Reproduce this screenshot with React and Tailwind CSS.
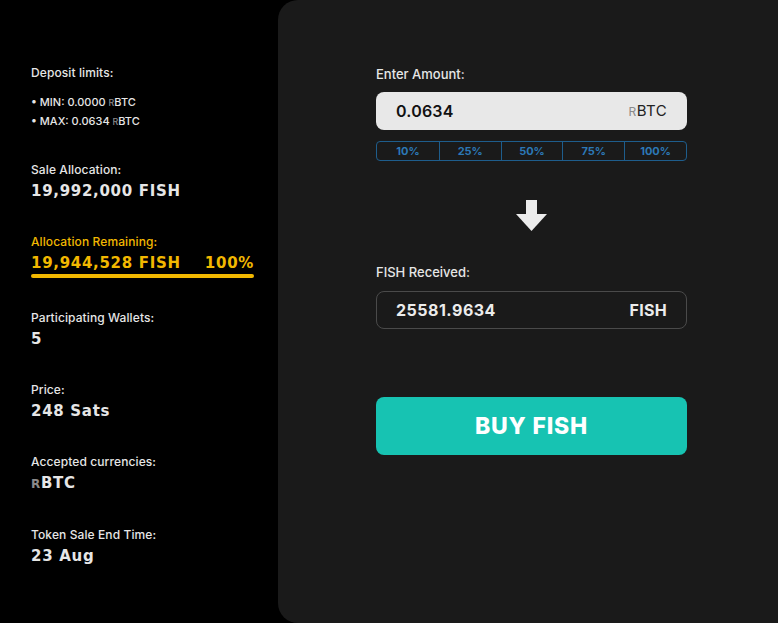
import React from 'react'

const label = "font-['Inter',sans-serif] font-medium text-[12px] text-[#e6e6e6] leading-[16px] tracking-[0.1px]"
const value = "font-['DejaVu_Sans',sans-serif] font-bold text-[15px] text-[#e6e6e6] leading-[20px] tracking-[0.7px]"

function Rbtc({ className = '' }) {
    return (
        <span className={className}>
            <span className="text-[#8a8a8a] text-[0.8em]">R</span>BTC
        </span>
    )
}

function Stat({ title, children, className = '' }) {
    return (
        <div className={`flex flex-col gap-[3px] ${className}`}>
            <div className={label}>{title}</div>
            <div className={value}>{children}</div>
        </div>
    )
}

export default function App() {
    const percents = ['10%', '25%', '50%', '75%', '100%']

    return (
        <div className="w-[778px] h-[623px] bg-black flex overflow-hidden">
            {/* left info column */}
            <div className="w-[278px] shrink-0 pl-[31px] pt-[65px] flex flex-col">
                <div className={label}>Deposit limits:</div>
                <div className="mt-[12px] flex flex-col font-['Inter',sans-serif] font-medium text-[11px] text-[#e6e6e6] leading-[18px]">
                    <div>• MIN: 0.0000 <Rbtc /></div>
                    <div>• MAX: 0.0634 <Rbtc /></div>
                </div>

                <Stat title="Sale Allocation:" className="mt-[31px]">19,992,000 FISH</Stat>

                <div className="mt-[33px] w-[223px] flex flex-col">
                    <div className={`${label} !text-[#f2b800]`}>Allocation Remaining:</div>
                    <div className={`${value} !text-[#f2b800] mt-[3px] flex justify-between`}>
                        <span>19,944,528 FISH</span>
                        <span>100%</span>
                    </div>
                    <div className="mt-[1px] h-[4px] rounded-full bg-[#f2b800]"></div>
                </div>

                <Stat title="Participating Wallets:" className="mt-[32px]">5</Stat>
                <Stat title="Price:" className="mt-[33px]">248 Sats</Stat>
                <Stat title="Accepted currencies:" className="mt-[33px]"><Rbtc /></Stat>
                <Stat title="Token Sale End Time:" className="mt-[33px]">23 Aug</Stat>
            </div>

            {/* right purchase panel */}
            <div className="flex-1 bg-[#1a1a1a] rounded-l-[20px] pl-[98px] pt-[65px]">
                <div className="w-[311px] flex flex-col font-['Inter',sans-serif]">
                    <div className="text-[13px] font-medium text-[#e6e6e6] leading-[18px]">Enter Amount:</div>
                    <div className="mt-[9px] h-[38px] rounded-[8px] bg-[#e8e8e8] flex items-center justify-between px-[20px]">
                        <span className="text-[16px] font-semibold text-[#111] tracking-[0.2px]">0.0634</span>
                        <Rbtc className="text-[15px] text-[#222] tracking-[0.4px]" />
                    </div>
                    <div className="mt-[11px] h-[20px] grid grid-cols-5 border border-[#1e5d8c] rounded-[4px] overflow-hidden">
                        {percents.map((p, i) => (
                            <button
                                key={p}
                                className={`text-[11px] font-bold text-[#2c78b6] leading-none ${i > 0 ? 'border-l border-[#1e5d8c]' : ''}`}
                            >
                                {p}
                            </button>
                        ))}
                    </div>

                    <div className="mt-[39px] flex justify-center">
                        <svg width="31" height="31" viewBox="0 0 31 31">
                            <rect x="10" y="0" width="11" height="15" fill="#ececec" />
                            <polygon points="0,14 31,14 15.5,31" fill="#ececec" />
                        </svg>
                    </div>

                    <div className="mt-[32px] text-[13px] font-medium text-[#e6e6e6] leading-[18px]">FISH Received:</div>
                    <div className="mt-[10px] h-[38px] rounded-[8px] border border-[#4a4a4a] flex items-center justify-between px-[19px]">
                        <span className="text-[16px] font-bold text-[#ececec] tracking-[0.5px]">25581.9634</span>
                        <span className="text-[16px] font-bold text-[#ececec] tracking-[0.3px]">FISH</span>
                    </div>

                    <button className="mt-[68px] h-[58px] rounded-[8px] bg-[#17c3b2] text-white text-[23px] font-extrabold tracking-[0.8px]">
                        BUY FISH
                    </button>
                </div>
            </div>
        </div>
    )
}
